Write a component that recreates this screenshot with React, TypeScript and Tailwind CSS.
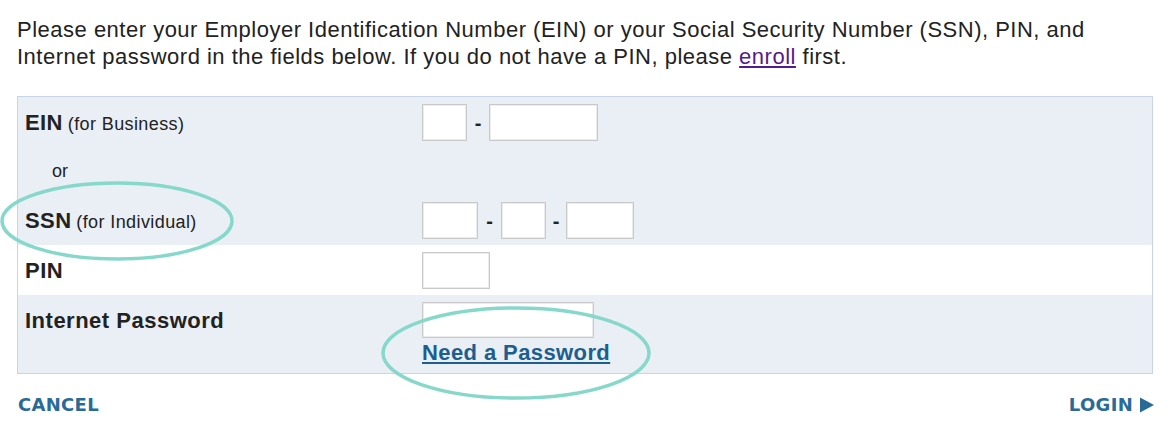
import React from "react";

const Input = ({ w }: { w: string }) => (
  <div className={`${w} h-[37px] bg-white border border-[#c9c9c9] shadow-[inset_0_0_0_1px_#ececec]`} />
);

const Dash = ({ w }: { w: string }) => (
  <span className={`${w} text-center text-[20px] font-bold text-[#222] leading-none`}>-</span>
);

export default function App() {
  return (
    <div className="relative w-[1170px] h-[431px] bg-white font-['Liberation_Sans',Arial,sans-serif] text-[#222] overflow-hidden">
      <p className="pl-[17px] pt-[16px] text-[22px] tracking-[0.5px] leading-[27px] text-[#222]">
        Please enter your Employer Identification Number (EIN) or your Social Security Number (SSN), PIN, and
        <br />
        Internet password in the fields below. If you do not have a PIN, please{" "}
        <a className="text-[#551a8b] underline">enroll</a> first.
      </p>

      <div className="mx-[17px] mt-[26px] w-[1136px] border border-[#c7d4e9]">
        <div className="bg-[#eaeef5] pt-[7px] pb-[6px]">
          <div className="flex h-[37px] items-center">
            <div className="w-[404px] pl-[7px] tracking-[0.4px]">
              <span className="text-[22px] font-bold">EIN</span>{" "}
              <span className="text-[18px]">(for Business)</span>
            </div>
            <Input w="w-[45px]" />
            <Dash w="w-[22px]" />
            <Input w="w-[109px]" />
          </div>
          <div className="flex h-[61px] items-center pl-[34px] text-[18px]">or</div>
          <div className="flex h-[37px] items-center">
            <div className="w-[404px] pl-[7px] tracking-[0.4px]">
              <span className="text-[22px] font-bold">SSN</span>{" "}
              <span className="text-[18px]">(for Individual)</span>
            </div>
            <Input w="w-[56px]" />
            <Dash w="w-[23px]" />
            <Input w="w-[45px]" />
            <Dash w="w-[20px]" />
            <Input w="w-[68px]" />
          </div>
        </div>
        <div className="bg-white flex h-[50px] items-center">
          <div className="w-[404px] pl-[7px] text-[22px] font-bold tracking-[0.5px]">PIN</div>
          <Input w="w-[68px]" />
        </div>
        <div className="bg-[#eaeef5] h-[78px] pt-[7px] flex">
          <div className="w-[404px] pl-[7px] h-[36px] flex items-center text-[22px] font-bold tracking-[0.5px]">Internet Password</div>
          <div className="flex flex-col">
            <div className="w-[172px] h-[36px] bg-white border border-[#c9c9c9] shadow-[inset_0_0_0_1px_#ececec]" />
            <a className="mt-[2px] text-[22px] tracking-[0.4px] leading-[26px] font-bold text-[#1c5e8e] underline">Need a Password</a>
          </div>
        </div>
      </div>

      <div className="flex justify-between items-center w-[1136px] ml-[18px] mt-[17px] font-['DejaVu_Sans',sans-serif] font-bold text-[#2a6a97] text-[18px] tracking-[0.3px]">
        <span>CANCEL</span>
        <span className="flex items-center gap-[7px]">
          LOGIN
          <svg width="14" height="16" viewBox="0 0 14 16">
            <path d="M0 0.5 L14 8 L0 15.5 Z" fill="#2a6a97" />
          </svg>
        </span>
      </div>

      <svg className="absolute left-0 top-0 pointer-events-none" width="1170" height="431">
        <ellipse cx="117" cy="221" rx="115" ry="38" fill="none" stroke="#86d8cb" strokeWidth="3.5" />
        <ellipse cx="516" cy="353" rx="133" ry="45" fill="none" stroke="#86d8cb" strokeWidth="3.5" />
      </svg>
    </div>
  );
}
